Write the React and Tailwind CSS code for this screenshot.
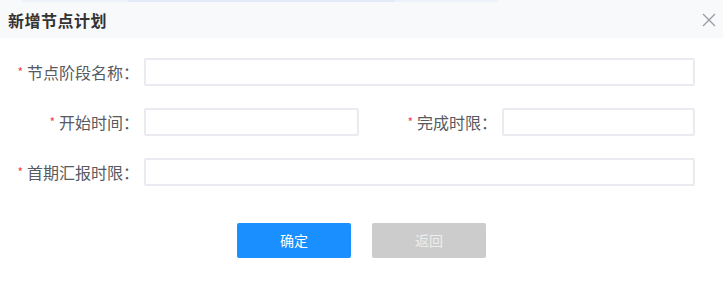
export default function App() {
  const font = { fontFamily: '"Microsoft YaHei", "Noto Sans CJK SC", "Noto Sans", sans-serif' };

  const Label = ({ children, className = '' }) => (
    <div className={`flex items-center justify-end pr-[5px] text-[16px] text-[#565a61] ${className}`}>
      <span className="mr-[4px] text-[12px] leading-none text-[#f0474a]">*</span>
      <span>{children}</span>
    </div>
  );

  const Input = ({ className = '' }) => (
    <div className={`h-[28px] rounded-[2px] border-2 border-[#e9ebf1] bg-white ${className}`} />
  );

  return (
    <div className="h-[291px] w-[723px] overflow-hidden bg-white" style={font}>
      {/* header */}
      <div className="h-[38px] bg-[#f8f9fb]">
        <div className="flex h-[2px]">
          <div className="w-[22px]" />
          <div className="w-[106px] bg-[#eef2fb]" />
          <div className="w-[267px] bg-[#e3ebfb]" />
          <div className="w-[103px] bg-[#eef2fb]" />
        </div>
        <div className="flex h-[36px] items-center justify-between pl-[8px] pr-[7px]">
          <span className="text-[16px] font-bold tracking-[0.5px] text-[#333]">新增节点计划</span>
          <svg width="14" height="14" viewBox="0 0 14 14">
            <path d="M1 1 L13 13 M13 1 L1 13" stroke="#9a9ca3" strokeWidth="1.4" fill="none" />
          </svg>
        </div>
      </div>

      {/* form */}
      <div className="mt-[20px] grid grid-cols-[144px_215px_143px_193px] gap-y-[22px]">
        <Label>节点阶段名称：</Label>
        <Input className="col-span-3" />

        <Label>开始时间：</Label>
        <Input />
        <Label>完成时限：</Label>
        <Input />

        <Label>首期汇报时限：</Label>
        <Input className="col-span-3" />
      </div>

      {/* buttons */}
      <div className="mt-[37px] flex justify-center gap-[21px]">
        <button className="h-[35px] w-[114px] rounded-[2px] bg-[#1a8fff] text-[14px] text-white">确定</button>
        <button className="h-[35px] w-[114px] rounded-[2px] bg-[#cccccc] text-[14px] text-[#eeeeee]">返回</button>
      </div>
    </div>
  );
}
